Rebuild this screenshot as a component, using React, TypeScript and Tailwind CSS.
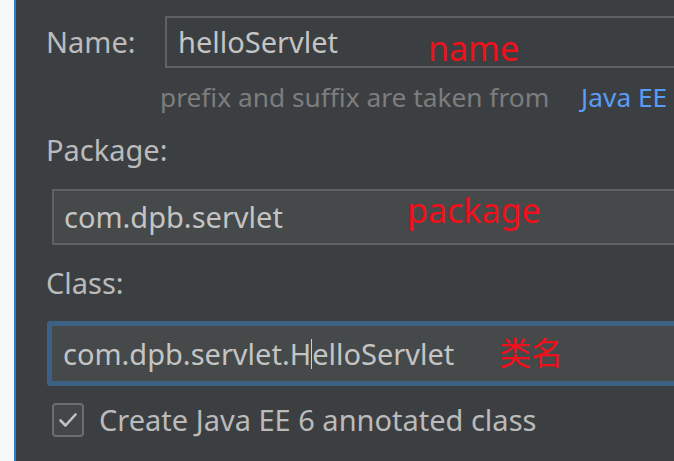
import type { ReactNode } from "react";

const font = { fontFamily: '"Noto Sans", "Open Sans", "Noto Sans CJK SC", sans-serif' };

function Annotation({ children, className }: { children: ReactNode; className: string }) {
  return <span className={`absolute leading-none text-[#f0101c] ${className}`}>{children}</span>;
}

export default function App() {
  return (
    <div className="flex h-[461px] w-[674px] overflow-hidden bg-white" style={font}>
      <div className="w-[14px] shrink-0 bg-[#f7f8fa]" />
      <div className="w-[2px] shrink-0 bg-[#2a7fd6]" />
      <div className="flex min-w-0 flex-1 flex-col overflow-hidden bg-[#3c3f41] pl-[30px] text-[29px] leading-[32px] text-[#bbbbbb]">
        <div className="mt-[16px] flex h-[52px] items-center">
          <span className="w-[119px] shrink-0">Name:</span>
          <div className="relative -mr-6 flex h-full flex-1 items-center border-2 border-[#5f6162] pl-[11px] text-[#c4c4c4]">
            helloServlet
            <Annotation className="left-[261px] top-[13px] text-[34px]">name</Annotation>
          </div>
        </div>
        <div className="mt-[13px] whitespace-nowrap pl-[114px] text-[26.3px] text-[#7c7d7e]">
          prefix and suffix are taken from <span className="ml-[25px] text-[#589df6]">Java EE</span>
        </div>
        <div className="mt-[21px]">Package:</div>
        <div className="relative -mr-6 ml-[6px] mt-[23px] flex h-[56px] items-center border-2 border-[#5f6162] bg-[#45494a] pl-[10px] text-[#c4c4c4]">
          com.dpb.servlet
          <Annotation className="left-[353px] top-[2px] text-[34px]">package</Annotation>
        </div>
        <div className="mt-[22px]">Class:</div>
        <div className="relative -mr-6 ml-[1px] mt-[22px] flex h-[65px] items-center rounded-[3px] border-[5px] border-[#3d6185] bg-[#45494a] pl-[11px] text-[#c4c4c4]">
          com.dpb.servlet.H<span className="inline-block h-[30px] w-[1px] bg-[#d0d0d0]" />elloServlet
          <Annotation className="left-[447px] top-[11px] text-[32px]">类名</Annotation>
        </div>
        <label className="ml-[6px] mt-[17px] flex items-center gap-[15px]">
          <span className="flex h-[34px] w-[32px] shrink-0 items-center justify-center rounded-[4px] border-2 border-[#6b6d6e] bg-[#43474a]">
            <svg width="22" height="18" viewBox="0 0 22 18" fill="none">
              <path d="M3.5 9.5 L8.5 14.5 L18.5 3.5" stroke="#c2c2c2" strokeWidth="2.6" strokeLinecap="round" strokeLinejoin="round" />
            </svg>
          </span>
          <span className="whitespace-nowrap">Create Java EE 6 annotated class</span>
        </label>
      </div>
    </div>
  );
}
